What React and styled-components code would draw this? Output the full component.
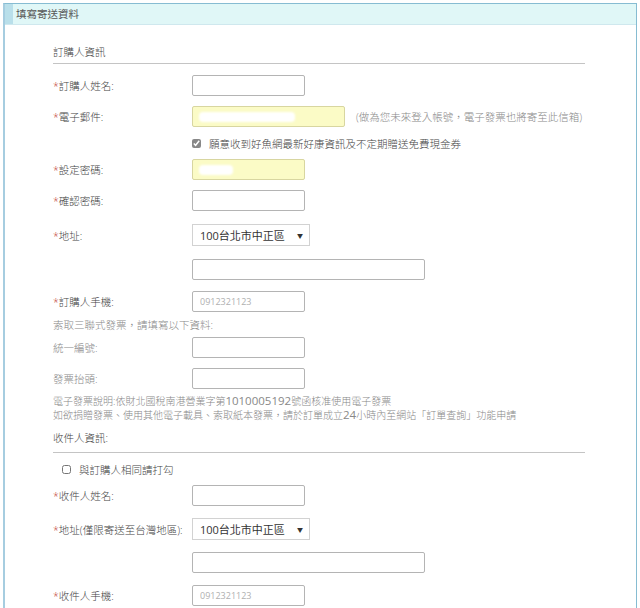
import styled, { createGlobalStyle } from 'styled-components';

const GlobalStyle = createGlobalStyle`
  html, body {
    margin: 0;
    padding: 0;
    background: #ffffff;
  }
  body {
    font-family: "Open Sans", "Noto Sans CJK TC", sans-serif;
  }
`;

const App = () => {
  return (
    <>
      <GlobalStyle />
      <Page>
        <Panel>
          <Header>填寫寄送資料</Header>
          <Body>
            <SectionTitle $pb={4}>訂購人資訊</SectionTitle>

            <Row $mt={11}>
              <Label><Star>*</Star>訂購人姓名:</Label>
              <TextBox $w={113} />
            </Row>

            <Row $mt={10}>
              <Label><Star>*</Star>電子郵件:</Label>
              <Filled $w={153}>
                <Smudge $w={96} />
              </Filled>
              <Hint>(做為您未來登入帳號，電子發票也將寄至此信箱)</Hint>
            </Row>

            <CheckRow $mt={9} $indent={139}>
              <Box type="checkbox" defaultChecked />
              <span>願意收到好魚網最新好康資訊及不定期贈送免費現金券</span>
            </CheckRow>

            <Row $mt={9}>
              <Label><Star>*</Star>設定密碼:</Label>
              <Filled $w={113}>
                <Smudge $w={34} />
              </Filled>
            </Row>

            <Row $mt={10}>
              <Label><Star>*</Star>確認密碼:</Label>
              <TextBox $w={113} />
            </Row>

            <Row $mt={13}>
              <Label><Star>*</Star>地址:</Label>
              <Select>
                <span>100台北市中正區</span>
                <Caret>▼</Caret>
              </Select>
            </Row>

            <Row $mt={13}>
              <Label />
              <TextBox $w={233} />
            </Row>

            <Row $mt={11}>
              <Label><Star>*</Star>訂購人手機:</Label>
              <TextBox $w={113} placeholder="0912321123" />
            </Row>

            <Note $mt={6}>索取三聯式發票，請填寫以下資料:</Note>

            <Row $mt={5}>
              <Label $muted>統一編號:</Label>
              <TextBox $w={113} />
            </Row>

            <Row $mt={10}>
              <Label $muted>發票抬頭:</Label>
              <TextBox $w={113} />
            </Row>

            <Note $mt={5} $small>
              電子發票說明:依財北國稅南港營業字第<Num>1010005192</Num>號函核准使用電子發票
              <br />
              如欲捐贈發票、使用其他電子載具、索取紙本發票，請於訂單成立<Num>24</Num>小時內至網站「訂單查詢」功能申請
            </Note>

            <SectionTitle $mt={9} $pb={7}>收件人資訊:</SectionTitle>

            <CheckRow $mt={9} $indent={9}>
              <Box type="checkbox" />
              <span>與訂購人相同請打勾</span>
            </CheckRow>

            <Row $mt={9}>
              <Label><Star>*</Star>收件人姓名:</Label>
              <TextBox $w={113} />
            </Row>

            <Row $mt={12}>
              <Label><Star>*</Star>地址(僅限寄送至台灣地區):</Label>
              <Select>
                <span>100台北市中正區</span>
                <Caret>▼</Caret>
              </Select>
            </Row>

            <Row $mt={12}>
              <Label />
              <TextBox $w={233} />
            </Row>

            <Row $mt={12}>
              <Label><Star>*</Star>收件人手機:</Label>
              <TextBox $w={113} placeholder="0912321123" />
            </Row>
          </Body>
        </Panel>
      </Page>
    </>
  );
};

export default App;

const Page = styled('div')`
  width: 640px;
  height: 608px;
  padding: 3px 3px 0 3px;
  box-sizing: border-box;
  overflow: hidden;
`;

const Panel = styled('div')`
  border: 1px solid #86bcd2;
  border-left: 2px solid #a6cde0;
  border-bottom: none;
  height: 620px;
  box-sizing: border-box;
`;

const Header = styled('div')`
  height: 20px;
  line-height: 20px;
  padding-left: 11px;
  background: linear-gradient(to right, #b9dfea 0, #b9dfea 8px, #e0f7f7 8px);
  border-bottom: 1px solid #cfe8ee;
  font-size: 10.5px;
  color: #555;
`;

const Body = styled('div')`
  padding: 20px 0 0 48px;
  display: flex;
  flex-direction: column;
`;

const SectionTitle = styled('div')`
  width: 532px;
  margin-top: ${({ $mt }) => $mt || 0}px;
  padding-bottom: ${({ $pb }) => $pb}px;
  border-bottom: 1px solid #c4c4c4;
  font-size: 10.5px;
  font-weight: 300;
  line-height: 14px;
  color: #444;
`;

const Row = styled('div')`
  display: flex;
  align-items: center;
  margin-top: ${({ $mt }) => $mt}px;
`;

const Label = styled('div')`
  width: 139px;
  flex-shrink: 0;
  font-size: 10.5px;
  font-weight: 300;
  color: ${({ $muted }) => ($muted ? '#888' : '#444')};
`;

const Star = styled('span')`
  color: #c0392b;
`;

const TextBox = styled('input')`
  width: ${({ $w }) => $w}px;
  height: 21px;
  box-sizing: border-box;
  margin: 0;
  padding: 0 7px;
  border: 1px solid #b4b4b4;
  border-radius: 2px;
  background: #fff;
  font-family: "Open Sans", sans-serif;
  font-size: 9px;
  color: #999;
  outline: none;

  &::placeholder {
    color: #b0b0b0;
  }
`;

const Filled = styled('div')`
  position: relative;
  width: ${({ $w }) => $w}px;
  height: 21px;
  box-sizing: border-box;
  border: 1px solid #d8d6a0;
  border-radius: 2px;
  background: #fbfbc6;
`;

const Smudge = styled('span')`
  position: absolute;
  left: 6px;
  top: 5px;
  width: ${({ $w }) => $w}px;
  height: 10px;
  border-radius: 4px;
  background: #ffffff;
  filter: blur(1px);
`;

const Hint = styled('span')`
  margin-left: 11px;
  font-size: 10.5px;
  font-weight: 300;
  color: #888;
`;

const CheckRow = styled('label')`
  display: flex;
  align-items: center;
  gap: 8px;
  margin-top: ${({ $mt }) => $mt}px;
  padding-left: ${({ $indent }) => $indent}px;
  height: 14px;
  font-size: 10.5px;
  font-weight: 300;
  color: #444;
`;

const Box = styled('input')`
  width: 9px;
  height: 9px;
  margin: 0;
  accent-color: #888;
`;

const Note = styled('div')`
  margin-top: ${({ $mt }) => $mt}px;
  font-size: ${({ $small }) => ($small ? 10 : 10.5)}px;
  font-weight: 300;
  line-height: 14px;
  color: #888;
`;

const Num = styled('span')`
  font-size: 11.5px;
  font-weight: 400;
`;

const Select = styled('div')`
  display: flex;
  align-items: center;
  justify-content: space-between;
  width: 118px;
  height: 22px;
  box-sizing: border-box;
  padding: 0 6px 0 7px;
  border: 1px solid #d2d2d2;
  background: #fff;
  font-size: 11px;
  color: #333;
`;

const Caret = styled('span')`
  font-size: 6px;
  color: #333;
`;
